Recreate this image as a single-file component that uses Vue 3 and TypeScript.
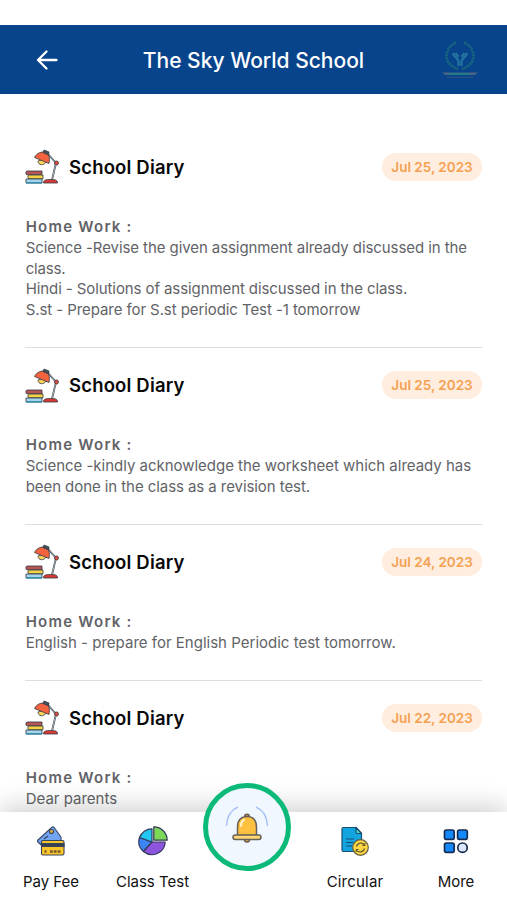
<script setup lang="ts">
interface Line {
  text: string
  spacing: number
}

interface Entry {
  id: number
  date: string
  lines: Line[]
}

const entries: Entry[] = [
  {
    id: 1,
    date: 'Jul 25, 2023',
    lines: [
      { text: 'Science -Revise the given assignment already discussed in the', spacing: -0.08 },
      { text: 'class.', spacing: -0.2 },
      { text: 'Hindi - Solutions of assignment discussed in the class.', spacing: -0.09 },
      { text: 'S.st - Prepare for S.st periodic Test -1 tomorrow', spacing: -0.08 },
    ],
  },
  {
    id: 2,
    date: 'Jul 25, 2023',
    lines: [
      { text: 'Science -kindly acknowledge the worksheet which already has', spacing: -0.02 },
      { text: 'been done in the class as a revision test.', spacing: -0.07 },
    ],
  },
  {
    id: 3,
    date: 'Jul 24, 2023',
    lines: [{ text: 'English - prepare for English Periodic test tomorrow.', spacing: 0.01 }],
  },
  {
    id: 4,
    date: 'Jul 22, 2023',
    lines: [{ text: 'Dear parents', spacing: 0 }],
  },
]
</script>

<template>
  <div class="screen">
    <header class="bar">
      <svg class="back" viewBox="0 0 22 20" width="22" height="20">
        <path d="M20.500 10H2.500M10.500 1.500L2 10l8.500 8.500" />
      </svg>
      <h1 class="title">The Sky World School</h1>
      <svg class="crest" viewBox="0 0 36 40" width="36" height="40">
        <g fill="none" stroke="#18657f" stroke-width="2.600" stroke-dasharray="2.400 .7">
          <path d="M14 2.500C5 6 2 17 7 23c2 3 5 4.500 9 6" />
          <path d="M22 2.500C31 6 34 17 29 23c-2 3-5 4.500-9 6" />
        </g>
        <path d="M11 13c1 5 4 4 5.500 8v5M25 13c-1 5-4 4-5.500 8v5M13.500 13l3 4M22.500 13l-3 4" fill="none" stroke="#2272a0" stroke-width="2.300" />
        <path d="M0 32.500h36l-3 2.500H3z" fill="#4a6580" />
        <path d="M7 34h20" stroke="#16818a" stroke-width="2" stroke-dasharray="2 .6" />
        <path d="M5 37.300h26" stroke="#315882" stroke-width="1" />
      </svg>
    </header>

    <main class="list">
      <article v-for="entry in entries" :key="entry.id" class="entry">
        <div class="head">
          <svg class="lamp" viewBox="0 0 35 35" width="35" height="35">
            <g stroke="#303943" stroke-width=".8" stroke-linejoin="round">
              <path d="M23 5l8 9-4 17" fill="none" stroke="#3c4651" stroke-width="1.800" />
              <path d="M23 5l8 9-4 17" fill="none" stroke="#cbd3da" stroke-width=".7" />
              <path d="M13 12c0 4.500 6 5 8 1l-1-3z" fill="#ffd45b" />
              <path d="M9.500 8.500C11.500 4 17 2 21 3.500c3 1.500 4 5 3 11z" fill="#f4633f" />
              <path d="M18 3.500l1-2.500 5 2-.5 3z" fill="#46505b" />
              <circle cx="31.500" cy="14" r="2" fill="#e94a35" />
              <path d="M18.500 34c0-3 2-3.500 7-3.500s7 .5 7 3.500z" fill="#d83a32" />
              <path d="M2 22h15v3.800H2c-1.500 0-1.500-3.800 0-3.800z" fill="#b95555" />
              <path d="M4 26h14v3.800H4c-1.500 0-1.500-3.800 0-3.800z" fill="#f5d243" />
              <path d="M1 30h16v4H1z" fill="#a5d5ea" />
            </g>
            <path d="M1 33.900h16" stroke="#258bb4" stroke-width="1.200" />
          </svg>
          <h2 class="name">School Diary</h2>
          <span class="date">{{ entry.date }}</span>
        </div>
        <h3 class="subject">Home Work :</h3>
        <p
          v-for="line in entry.lines"
          :key="line.text"
          class="line"
          :style="{ letterSpacing: line.spacing + 'px' }"
        >{{ line.text }}</p>
      </article>
    </main>

    <nav class="nav">
      <a class="tab fee">
        <svg viewBox="0 0 30 30" width="30" height="30">
          <g stroke="#37455f" stroke-width="1.100" stroke-linejoin="round">
            <path d="M2 14L16 1.200q1.300-.8 2.300.5L25 11v8L9 22 1.800 16q-.8-1 .2-2z" fill="#72a5f1" />
            <path d="M8 13l4-3M5.500 15l2 2" fill="none" />
            <circle cx="15.500" cy="5.500" r="2" fill="#e9b43c" />
            <rect x="5.500" y="14.500" width="22.500" height="14.500" rx="1.500" fill="#fbc529" />
            <path d="M5.500 17.500h22.500v3H5.500z" fill="#374152" />
            <path d="M14 25.500h11M8.500 25.500h2" stroke="#775a2e" stroke-width="2.400" stroke-dasharray="2.800 1" />
          </g>
        </svg>
        <span>Pay Fee</span>
      </a>
      <a class="tab test">
        <svg viewBox="0 0 30 30" width="30" height="30">
          <g stroke="#34385b" stroke-width="1.200" stroke-linejoin="round">
            <path d="M14 16L5.500 25.500A13.200 13.200 0 0 1 1.500 11.500z" fill="#3b86f2" />
            <path d="M14 16L1.500 11.500A13.200 13.200 0 0 1 14 2.800z" fill="#20c8f2" />
            <path d="M14 16h13.200A13.200 13.200 0 0 1 5.500 25.500z" fill="#8d55dd" />
            <path d="M15.800 14.200V.8A13.400 13.400 0 0 1 29.200 14.200z" fill="#7bd957" />
          </g>
        </svg>
        <span>Class Test</span>
      </a>
      <a class="bell">
        <svg viewBox="0 0 44 40" width="44" height="40">
          <path d="M1.500 22C2 13 6 6 13 3M42.500 22C42 13 38 6 31 3" fill="none" stroke="#a9c2f7" stroke-width="1.500" />
          <g stroke="#665f5a" stroke-width="1.500" stroke-linejoin="round">
            <circle cx="22" cy="12.500" r="2.300" fill="#d9a33c" />
            <circle cx="22" cy="35.500" r="2.500" fill="#efb036" />
            <path d="M12.500 31.500V23c0-7 4-10.500 9.500-10.500S31.500 16 31.500 23v8.500z" fill="#fdc13f" />
            <rect x="8" y="31" width="28" height="4.500" rx="2.200" fill="#ffd875" />
          </g>
          <path d="M16 22c0-3 1-5 3-6" fill="none" stroke="#fff2cb" stroke-width="2" stroke-linecap="round" />
        </svg>
      </a>
      <a class="tab circular">
        <svg viewBox="0 0 30 30" width="30" height="30">
          <g stroke="#174e73" stroke-width="1.200" stroke-linejoin="round">
            <path d="M3.500 1.500h12.500l5.500 6V25.500h-18q-1.500 0-1.500-1.500V3q0-1.500 1.500-1.500z" fill="#12a4df" />
            <path d="M16 1.500v4.500q0 1.500 1.500 1.500h4z" fill="#58dfc5" />
            <path d="M6 13h8M6 16.500h7M6 20h6" />
            <circle cx="20.500" cy="21.500" r="7.800" fill="#fdd643" stroke="#665f40" />
            <path d="M16.500 20.500c1-4 6-4.500 8-1.500M24.500 22.500c-1 4-6 4.500-8 1.500" fill="none" stroke="#6b602e" />
            <path d="M24.800 17v2.500h-2.500M16.200 26v-2.500h2.500" fill="none" stroke="#6b602e" />
          </g>
        </svg>
        <span>Circular</span>
      </a>
      <a class="tab more">
        <svg viewBox="0 0 30 30" width="30" height="30">
          <g stroke="#172b52" stroke-width="1.700" fill="#1389fb">
            <rect x="3.500" y="4" width="9.700" height="9.300" rx="1.700" />
            <rect x="16.600" y="4" width="9.700" height="9.300" rx="1.700" />
            <rect x="3.500" y="17" width="9.700" height="9.300" rx="1.700" />
            <circle cx="21.500" cy="21.700" r="4.700" fill="#dce8ff" />
          </g>
        </svg>
        <span>More</span>
      </a>
    </nav>
  </div>
</template>

<style>
body {
  margin: 0;
  background: #fff;
}
</style>

<style scoped>
.screen {
  box-sizing: border-box;
  display: flex;
  flex-direction: column;
  width: 507px;
  height: 900px;
  padding-top: 25px;
  overflow: hidden;
  background: #fff;
  font-family: Inter, 'Liberation Sans', sans-serif;
}

.bar {
  flex: none;
  display: grid;
  grid-template-columns: 53px 1fr 60px;
  align-items: center;
  box-sizing: border-box;
  height: 69px;
  padding: 0 29px 0 36px;
  background: #08448c;
}

.back {
  fill: none;
  stroke: #fff;
  stroke-width: 2.300;
  stroke-linecap: round;
  stroke-linejoin: round;
}

.title {
  margin: 2px 0 0;
  color: #fff;
  font-size: 21px;
  font-weight: 500;
  line-height: 28px;
  text-align: center;
  white-space: nowrap;
}

.crest {
  justify-self: end;
}

.list {
  flex: 1;
  min-height: 0;
  padding: 35.500px 25px 0;
  overflow: hidden;
}

.entry {
  box-sizing: border-box;
  padding: 20.200px 0 25.800px;
  border-bottom: 1px solid #dedede;
}

.head {
  display: flex;
  align-items: center;
  height: 34px;
  margin-bottom: 33.400px;
}

.name {
  margin: 0 auto 0 9px;
  color: #090909;
  font-size: 18.500px;
  font-weight: 600;
  line-height: 24px;
  letter-spacing: 0.170px;
}

.date {
  width: 100px;
  height: 28px;
  border-radius: 14px;
  background: #ffeddf;
  color: #f5a152;
  font-size: 13.500px;
  font-weight: 600;
  line-height: 28px;
  text-align: center;
}

.subject,
.line {
  margin: 0 0 0 0.700px;
  color: #626367;
  font-size: 15px;
  font-weight: 400;
  line-height: 20.800px;
  white-space: nowrap;
}

.subject {
  font-weight: 600;
  letter-spacing: 1.220px;
}

.nav {
  position: relative;
  flex: none;
  display: grid;
  grid-template-columns: 102px 101px 89px 126px 76px;
  height: 88px;
  background: #fff;
  box-shadow: 0 -6px 24px rgba(0, 0, 0, 0.18);
}

.tab {
  display: flex;
  flex-direction: column;
  align-items: center;
  padding-top: 14px;
  color: #111;
  font-size: 15px;
  line-height: 20px;
  white-space: nowrap;
}

.tab span {
  margin-top: 16px;
}

.bell {
  display: flex;
  align-items: center;
  justify-content: center;
  box-sizing: border-box;
  width: 88px;
  height: 88px;
  margin-top: -29px;
  padding-bottom: 7px;
  border: 5px solid #0bb978;
  border-radius: 50%;
  background: #f0f7fe;
}

.circular span {
  letter-spacing: 0.200px;
}
</style>
